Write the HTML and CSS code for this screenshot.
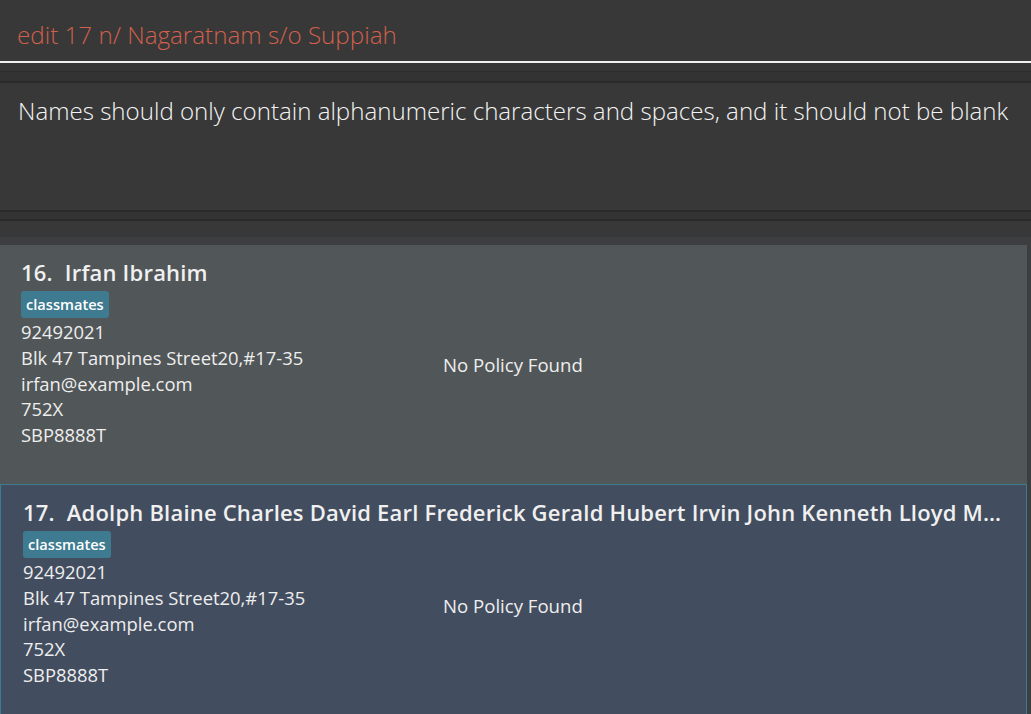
FILE: index.html
```html
<!DOCTYPE html>
<html>
<head>
<meta charset="utf-8">
<link rel="stylesheet" href="styles.css">
</head>
<body>
<div class="app">
  <div class="command-box">
    <div class="command-text">edit 17 n/ Nagaratnam s/o Suppiah</div>
  </div>
  <div class="gap-a"></div>
  <div class="result-box">
    <div class="result-text">Names should only contain alphanumeric characters and spaces, and it should not be blank</div>
  </div>
  <div class="gap-b"></div>
  <div class="list">
    <div class="card">
      <div class="info">
        <div class="name"><span class="idx">16.</span>Irfan Ibrahim</div>
        <div class="tags"><span class="tag">classmates</span></div>
        <div class="field">92492021</div>
        <div class="field">Blk 47 Tampines Street20,#17-35</div>
        <div class="field">irfan@example.com</div>
        <div class="field">752X</div>
        <div class="field">SBP8888T</div>
      </div>
      <div class="policy">No Policy Found</div>
    </div>
    <div class="card selected">
      <div class="info">
        <div class="name"><span class="idx">17.</span>Adolph Blaine Charles David Earl Frederick Gerald Hubert Irvin John Kenneth Lloyd Martin Nero Oliver Paul Quincy</div>
        <div class="tags"><span class="tag">classmates</span></div>
        <div class="field">92492021</div>
        <div class="field">Blk 47 Tampines Street20,#17-35</div>
        <div class="field">irfan@example.com</div>
        <div class="field">752X</div>
        <div class="field">SBP8888T</div>
      </div>
      <div class="policy">No Policy Found</div>
    </div>
  </div>
</div>
</body>
</html>
```
FILE: styles.css
```css
html, body {
  margin: 0;
  padding: 0;
  background: #383838;
  height: 100%;
  overflow: hidden;
}
body {
  font-family: "Open Sans", "Noto Sans", sans-serif;
}
.app {
  display: flex;
  flex-direction: column;
  width: 1031px;
  height: 714px;
}
.command-box {
  height: 61px;
  background: #383838;
  border-bottom: 2px solid #f2f2f2;
  display: flex;
  align-items: center;
  padding-left: 17px;
}
.command-text {
  color: #d1604c;
  font-size: 24.2px;
  font-weight: 300;
  margin-top: 7px;
}
.gap-a {
  height: 18px;
  background: #333333;
  border-bottom: 2px solid #2a2a2a;
  box-shadow: inset 0 8px 0 #363636, inset 0 9px 0 #2c2c2c;
}
.result-box {
  height: 129px;
  background: #383838;
  padding: 11px 0 0 18px;
  box-sizing: border-box;
  border-bottom: 2px solid #2a2a2a;
}
.result-text {
  color: #f4f4f4;
  font-size: 24.1px;
  font-weight: 300;
  white-space: nowrap;
}
.gap-b {
  height: 7px;
  background: #333333;
  border-bottom: 2px solid #2a2a2a;
}
.list {
  flex: 1;
  padding: 0 4px 0 0;
  display: flex;
  flex-direction: column;
  overflow: hidden;
  background: linear-gradient(#383838 0 16px, #3c3e40 16px);
}
.list::before {
  content: "";
  display: block;
  height: 24px;
  flex-shrink: 0;
}
.card {
  background: #515658;
  display: flex;
  align-items: center;
  height: 239px;
  flex-shrink: 0;
  box-sizing: border-box;
  padding: 0 0 0 21px;
  color: #f2f2f2;
}
.card.selected {
  background: #424d5f;
  border: 1px solid #3e7b91;
  border-bottom: none;
  padding-left: 22px;
  padding-top: 0;
  height: 241px;
}
.info {
  width: 422px;
  flex-shrink: 0;
  display: flex;
  flex-direction: column;
  align-self: flex-start;
  padding-top: 12px;
}
.selected .info {
  width: 420px;
}
.name {
  font-size: 22px;
  font-weight: 600;
  line-height: 30px;
  letter-spacing: 0.2px;
  white-space: nowrap;
  width: 990px;
  overflow: hidden;
  text-overflow: ellipsis;
  color: #f0f0f0;
}
.selected .name {
  width: 988px;
}
.idx {
  margin-right: 12px;
}
.tags {
  margin-top: 4px;
  margin-bottom: 1px;
  display: flex;
}
.tag {
  background: #3e7b91;
  color: #ffffff;
  font-size: 14.6px;
  font-weight: 600;
  border-radius: 3px;
  padding: 3px 5px 3px 5px;
  line-height: 21px;
}
.field {
  font-size: 18.4px;
  line-height: 25.8px;
  color: #eeeeee;
  white-space: nowrap;
}
.policy {
  font-size: 18.6px;
  color: #eeeeee;
}
```
